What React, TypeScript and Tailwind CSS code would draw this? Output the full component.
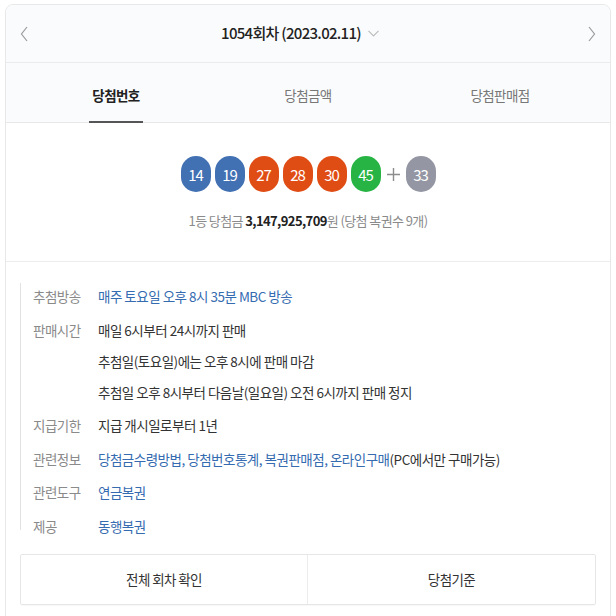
import React from 'react';

type Ball = { n: number; color: string };

const balls: Ball[] = [
  { n: 14, color: 'bg-[#4170b3]' },
  { n: 19, color: 'bg-[#4170b3]' },
  { n: 27, color: 'bg-[#e04d14]' },
  { n: 28, color: 'bg-[#e04d14]' },
  { n: 30, color: 'bg-[#e04d14]' },
  { n: 45, color: 'bg-[#27b444]' },
];

function NumBall({ n, color }: Ball) {
  return (
    <span
      className={`${color} w-[30px] h-[36px] rounded-full flex items-center justify-center text-white text-[15px] tracking-[-1px] leading-none`}
    >
      {n}
    </span>
  );
}

function Row({ label, children }: { label: string; children: React.ReactNode }) {
  return (
    <div className="flex leading-[31px]">
      <span className="w-[65px] shrink-0 text-[#8a8a8a]">{label}</span>
      <div className="flex flex-col">{children}</div>
    </div>
  );
}

export default function App() {
  return (
    <div className="min-h-screen bg-white pt-[4px] font-['Noto_Sans_CJK_KR','Noto_Sans',sans-serif]">
      <div className="mx-[5px] border border-[#e8e8e8] rounded-[8px] overflow-hidden bg-white">
        {/* header */}
        <div className="h-[58px] bg-[#fafbfc] border-b border-[#ececec] flex items-center justify-between px-[14px]">
          <button className="w-[8px] h-[16px] flex items-center">
            <svg width="8" height="16" viewBox="0 0 8 16" fill="none">
              <path d="M7 1L1.5 8L7 15" stroke="#9a9a9a" strokeWidth="1.2" />
            </svg>
          </button>
          <div className="flex items-center">
            <span className="text-[15px] font-medium text-[#222] tracking-[-0.7px]">1054회차 (2023.02.11)</span>
            <span className="w-[34px] pl-[7px] flex items-center">
              <svg width="11" height="7" viewBox="0 0 11 7" fill="none">
                <path d="M0.5 0.8L5.5 6L10.5 0.8" stroke="#bbbbbb" strokeWidth="1.1" />
              </svg>
            </span>
          </div>
          <button className="w-[8px] h-[16px] flex items-center">
            <svg width="8" height="16" viewBox="0 0 8 16" fill="none">
              <path d="M1 1L6.5 8L1 15" stroke="#9a9a9a" strokeWidth="1.2" />
            </svg>
          </button>
        </div>

        {/* tabs */}
        <div className="bg-[#fafbfc] border-b border-[#e8e8e8] px-[14px] grid grid-cols-3 h-[60px] text-[13.5px] tracking-[-0.6px]">
          <div className="flex justify-center -mb-px">
            <span className="flex items-center pt-[6px] px-[3px] border-b-2 border-[#555] font-bold text-[#222]">당첨번호</span>
          </div>
          <div className="flex items-center justify-center pt-[6px] text-[#777]">당첨금액</div>
          <div className="flex items-center justify-center pt-[6px] text-[#777]">당첨판매점</div>
        </div>

        {/* balls */}
        <div className="h-[139px] border-b border-[#ececec] flex flex-col items-center pt-[33px]">
          <div className="flex items-center gap-[4px]">
            {balls.map((b) => (
              <NumBall key={b.n} n={b.n} color={b.color} />
            ))}
            <span className="w-[13px] h-[13px] mx-[2px] flex items-center justify-center">
              <svg width="13" height="13" viewBox="0 0 13 13" fill="none">
                <path d="M6.5 0V13M0 6.5H13" stroke="#8c8c8c" strokeWidth="1.4" />
              </svg>
            </span>
            <NumBall n={33} color="bg-[#9497a3]" />
          </div>
          <p className="mt-[19px] leading-[20px] text-[13px] tracking-[-0.6px] text-[#8a8a8a]">
            1등 당첨금 <b className="font-bold text-[#222]">3,147,925,709</b>원 (당첨 복권수 9개)
          </p>
        </div>

        {/* info */}
        <div className="px-[14px] pt-[19px] pb-[40px]">
          <div className="relative pl-[13px] flex flex-col gap-[2.5px] text-[13.5px] tracking-[-0.5px] text-[#333]">
            <div className="absolute left-0 top-[2px] bottom-[12px] w-px bg-[#e2e2e2]" />
            <Row label="추첨방송">
              <span className="text-[#356bb0]">매주 토요일 오후 8시 35분 MBC 방송</span>
            </Row>
            <Row label="판매시간">
              <span>매일 6시부터 24시까지 판매</span>
              <span>추첨일(토요일)에는 오후 8시에 판매 마감</span>
              <span>추첨일 오후 8시부터 다음날(일요일) 오전 6시까지 판매 정지</span>
            </Row>
            <Row label="지급기한">
              <span>지급 개시일로부터 1년</span>
            </Row>
            <Row label="관련정보">
              <span>
                <a className="text-[#356bb0]">당첨금수령방법</a>
                <span className="text-[#356bb0]">, </span>
                <a className="text-[#356bb0]">당첨번호통계</a>
                <span className="text-[#356bb0]">, </span>
                <a className="text-[#356bb0]">복권판매점</a>
                <span className="text-[#356bb0]">, </span>
                <a className="text-[#356bb0]">온라인구매</a>
                (PC에서만 구매가능)
              </span>
            </Row>
            <Row label="관련도구">
              <a className="text-[#356bb0]">연금복권</a>
            </Row>
            <Row label="제공">
              <a className="text-[#356bb0]">동행복권</a>
            </Row>
          </div>

          <div className="mt-[12px] h-[51px] border border-[#e6e6e6] rounded-[2px] grid grid-cols-2 text-[13.5px] tracking-[-0.6px] text-[#333] shadow-[0_1px_1px_rgba(0,0,0,0.03)]">
            <button className="flex items-center justify-center border-r border-[#ececec]">전체 회차 확인</button>
            <button className="flex items-center justify-center">당첨기준</button>
          </div>
        </div>
      </div>
    </div>
  );
}
